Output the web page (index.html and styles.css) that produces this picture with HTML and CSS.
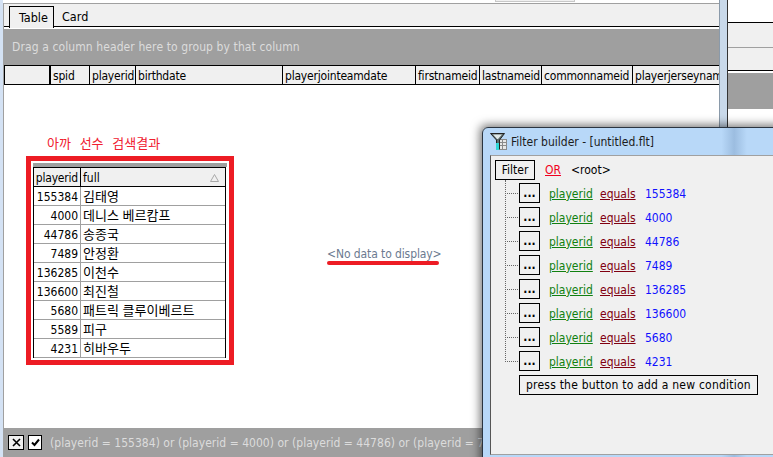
FILE: index.html
```html
<!DOCTYPE html>
<html lang="en">
<head>
  <meta charset="UTF-8" />
  <title>Filter builder</title>
  <link rel="stylesheet" href="styles.css">
</head>
<body>
  <div class="desktop">
    <div class="left-edge"></div>
    <div class="main-wrap">
      <div class="top-strip"><span class="top-box"></span></div>
      <div class="main-panel">
        <div class="tabs">
          <span class="tab active">Table</span>
          <span class="tab">Card</span>
        </div>
        <div class="group-bar">Drag a column header here to group by that column</div>
        <div class="col-header">
          <span class="col c-ind"></span>
          <span class="col c-spid">spid</span>
          <span class="col c-pid">playerid</span>
          <span class="col c-birth">birthdate</span>
          <span class="col c-join">playerjointeamdate</span>
          <span class="col c-first">firstnameid</span>
          <span class="col c-last">lastnameid</span>
          <span class="col c-common">commonnameid</span>
          <span class="col c-jersey">playerjerseynam</span>
        </div>
        <div class="grid-body">
          <p class="note">아까 선수 검색결과</p>
          <div class="result-box">
            <div class="result-top"></div>
            <div class="result-grid">
              <div class="result-row head"><span class="num">playerid</span><span class="name">full<svg class="sort" width="9" height="8" viewBox="0 0 9 8"><path d="M4.500 .5L8.500 7.500H.5z" fill="none" stroke="#a8a8a8"/></svg></span></div>
              <div class="result-row"><span class="num">155384</span><span class="name">김태영</span></div>
              <div class="result-row"><span class="num">4000</span><span class="name">데니스 베르캄프</span></div>
              <div class="result-row"><span class="num">44786</span><span class="name">송종국</span></div>
              <div class="result-row"><span class="num">7489</span><span class="name">안정환</span></div>
              <div class="result-row"><span class="num">136285</span><span class="name">이천수</span></div>
              <div class="result-row"><span class="num">136600</span><span class="name">최진철</span></div>
              <div class="result-row"><span class="num">5680</span><span class="name">패트릭 클루이베르트</span></div>
              <div class="result-row"><span class="num">5589</span><span class="name">피구</span></div>
              <div class="result-row"><span class="num">4231</span><span class="name">히바우두</span></div>
            </div>
          </div>
          <p class="no-data">&lt;No data to display&gt;</p>
        </div>
        <div class="status-bar">
          <span class="box x-box">
            <svg width="11" height="11" viewBox="0 0 11 11"><path d="M2 2l7 7M9 2l-7 7" stroke="#000" stroke-width="1.6" fill="none"/></svg>
          </span>
          <span class="box check-box">
            <svg width="11" height="11" viewBox="0 0 11 11"><path d="M2 5.500l2.500 2.500L9 2.500" stroke="#000" stroke-width="2" fill="none"/></svg>
          </span>
          <span class="filter-text">(playerid = 155384) or (playerid = 4000) or (playerid = 44786) or (playerid = 7489)</span>
        </div>
      </div>
    </div>

    <div class="split"></div>

    <div class="side-panel">
      <div class="side-a"></div>
      <div class="side-b"></div>
      <div class="side-c"></div>
      <div class="side-d"></div>
      <div class="side-e"></div>
    </div>

    <!-- floating window -->
    <div class="filter-window">
      <div class="title-bar">
        <svg class="funnel" width="18" height="18" viewBox="0 0 18 18">
          <rect x="8.500" y="6.500" width="8" height="10" fill="#e8e8e8" stroke="#8a8a8a"/>
          <path d="M9 9.500h7M9 12.500h7M12.500 7v9" stroke="#8a8a8a"/>
          <path d="M.5 .5h14L9.500 7v9H6.500V7z" fill="#5c6a6a" stroke="#222"/>
          <path d="M3 1.500h9L8 6H7z" fill="#dfe8e8"/>
          <rect x="6" y="10" width="3" height="7" fill="#2fd6d6"/>
        </svg>
        <span>Filter builder - [untitled.flt]</span>
      </div>
      <div class="client">
        <div class="root-row">
          <span class="filter-btn">Filter</span>
          <span class="or">OR</span>
          <span>&lt;root&gt;</span>
        </div>
        <div class="tree">
          <div class="cond"><span class="dots">...</span><span class="field">playerid</span><span class="op">equals</span><span class="val">155384</span></div>
          <div class="cond"><span class="dots">...</span><span class="field">playerid</span><span class="op">equals</span><span class="val">4000</span></div>
          <div class="cond"><span class="dots">...</span><span class="field">playerid</span><span class="op">equals</span><span class="val">44786</span></div>
          <div class="cond"><span class="dots">...</span><span class="field">playerid</span><span class="op">equals</span><span class="val">7489</span></div>
          <div class="cond"><span class="dots">...</span><span class="field">playerid</span><span class="op">equals</span><span class="val">136285</span></div>
          <div class="cond"><span class="dots">...</span><span class="field">playerid</span><span class="op">equals</span><span class="val">136600</span></div>
          <div class="cond"><span class="dots">...</span><span class="field">playerid</span><span class="op">equals</span><span class="val">5680</span></div>
          <div class="cond"><span class="dots">...</span><span class="field">playerid</span><span class="op">equals</span><span class="val">4231</span></div>
        </div>
        <div class="hint">press the button to add a new condition</div>
      </div>
    </div>
  </div>
</body>
</html>
```

FILE: styles.css
```css
/* 1. GLOBAL */
* {
  box-sizing: border-box;
  margin: 0;
  padding: 0;
}
html, body {
  width: 773px;
  height: 457px;
  overflow: hidden;
}
body {
  font-family: "DejaVu Sans Condensed", "Noto Sans CJK KR", sans-serif;
  font-stretch: condensed;
  font-size: 12px;
  color: #000;
  background-color: #fff;
}
.desktop {
  position: relative;
  display: flex;
  width: 773px;
  height: 457px;
  overflow: hidden;
}
.left-edge {
  flex: none;
  width: 3px;
  background-color: #d4e2f4;
}

/* 2. MAIN GRID PANEL */
.main-wrap {
  display: flex;
  flex: none;
  flex-direction: column;
  width: 716px;
}
.top-strip {
  flex: none;
  height: 3px;
  padding-left: 492px;
  background-color: #fff;
}
.top-box {
  display: block;
  width: 80px;
  height: 2px;
  background-color: #f0f0f0;
  border: 1px solid #c8c8c8;
  border-top: none;
}
.main-panel {
  display: flex;
  flex: 1;
  flex-direction: column;
  border-left: 1px solid #a0a0a0;
  border-top: 1px solid #a0a0a0;
  overflow: hidden;
}
.tabs {
  display: flex;
  flex: none;
  height: 23px;
  padding: 2px 0 0 5px;
  background-color: #f0f0f0;
  border-bottom: 1px solid #000;
}
.tab {
  height: 22px;
  line-height: 22px;
  padding: 0 8px;
  font-size: 12.500px;
}
.tab.active {
  width: 45px;
  padding: 0 9px;
  line-height: 21px;
  border: 1px solid #000;
  border-bottom: none;
  background-color: #f0f0f0;
}
.group-bar {
  flex: none;
  height: 36px;
  margin-top: 2px;
  padding-left: 8px;
  line-height: 37px;
  letter-spacing: 0.1px;
  color: #dcdcdc;
  background-color: #9f9f9f;
}
.col-header {
  display: flex;
  flex: none;
  height: 20px;
  background-color: #f0f0f0;
  border-top: 1px solid #000;
  border-bottom: 1px solid #000;
}
.col {
  height: 18px;
  line-height: 20px;
  padding-left: 2px;
  letter-spacing: -0.2px;
  border-left: 1px solid #000;
  white-space: nowrap;
  overflow: hidden;
}
.c-ind { width: 45px; }
.c-spid { width: 40px; border-left-width: 2px; }
.c-pid { width: 46px; }
.c-birth { width: 147px; }
.c-join { width: 133px; }
.c-first { width: 64px; }
.c-last { width: 62px; }
.c-common { width: 91px; }
.c-jersey { width: 87px; }

.grid-body {
  position: relative;
  flex: 1;
  background-color: #fff;
}
.note {
  position: absolute;
  left: 43px;
  top: 48px;
  font-size: 13px;
  color: #f02030;
  word-spacing: 5px;
}
.result-box {
  position: absolute;
  left: 22px;
  top: 71px;
  width: 208px;
  height: 209px;
  padding: 2px;
  border: 5px solid #ed1c24;
}
.result-top {
  height: 4px;
  background-color: #9f9f9f;
}
.result-grid {
  margin-right: 1px;
  border-left: 1px solid #000;
  border-right: 1px solid #000;
  border-top: 1px solid #000;
}
.result-row {
  display: flex;
  height: 19px;
  line-height: 20px;
  border-bottom: 1px solid #a0a0a0;
}
.result-row.head {
  background-color: #f0f0f0;
  border-bottom-color: #000;
}
.num {
  width: 47px;
  padding-right: 2px;
  text-align: right;
  border-right: 1px solid #a0a0a0;
}
.head .num {
  border-right-color: #000;
  letter-spacing: -0.2px;
}
.name {
  position: relative;
  flex: 1;
  padding-left: 2px;
  font-size: 13px;
}
.head .name {
  font-size: 12px;
}
.sort {
  position: absolute;
  right: 6px;
  top: 6px;
}
.no-data {
  position: absolute;
  left: 323px;
  top: 162px;
  letter-spacing: -0.1px;
  color: #6b7a90;
}
.no-data::after {
  content: "";
  display: block;
  width: 112px;
  height: 4px;
  border-radius: 2px;
  background-color: #ed1c24;
}
.status-bar {
  display: flex;
  flex: none;
  align-items: center;
  height: 29px;
  padding-left: 4px;
  color: #dcdcdc;
  background-color: #9f9f9f;
  white-space: nowrap;
}
.box {
  display: flex;
  align-items: center;
  justify-content: center;
  height: 15px;
  border: 1px solid #000;
  background-color: #f0f0f0;
}
.x-box { width: 16px; margin-right: 4px; }
.check-box { width: 14px; background-color: #fff; }
.filter-text { margin-left: 8px; letter-spacing: 0.03px; }

/* 3. SIDE PANEL */
.split {
  flex: none;
  width: 8px;
  background-color: #c9d9ea;
  border-left: 1px solid #8a9aaa;
}
.side-panel {
  flex: 1;
  border-left: 1px solid #333;
}
.side-a { height: 23px; background-color: #fff; border-bottom: 1px solid #000; }
.side-b { height: 25px; background-color: #f0f0f0; border-bottom: 1px solid #a0a0a0; }
.side-c { height: 23px; background-color: #f0f0f0; border-bottom: 1px solid #000; }
.side-d { height: 36px; margin-top: 2px; background-color: #9f9f9f; }
.side-e { height: 20px; background-color: #fff; }

/* 4. FILTER WINDOW */
.filter-window {
  position: absolute;
  left: 482px;
  top: 127px;
  width: 320px;
  height: 340px;
  padding: 0 0 0 7px;
  border: 1px solid #2a3440;
  border-radius: 6px 6px 0 0;
  background: linear-gradient(to right, #b8d8f8 75%, #9cbde0 79%, #b8d8f8 83%);
  box-shadow: -2px -2px 10px rgba(0, 0, 0, 0.55);
}
.title-bar {
  display: flex;
  align-items: center;
  gap: 3px;
  height: 27px;
  color: #1c1c1c;
}
.client {
  height: 300px;
  padding: 4px 0 0 4px;
  background-color: #f0f0f0;
  border-top: 1px solid #a0a0a0;
  border-left: 1px solid #555;
  border-bottom: 1px solid #a0a0a0;
}
.root-row {
  display: flex;
  align-items: center;
  gap: 10px;
  height: 20px;
}
.filter-btn {
  width: 40px;
  height: 20px;
  line-height: 18px;
  text-align: center;
  border: 1px solid #000;
}
.or {
  color: #f00020;
  text-decoration: underline;
}
.tree {
  position: relative;
  margin: -1px 0 0 10px;
  padding-left: 14px;
}
.tree::before {
  content: "";
  position: absolute;
  left: 0;
  top: 1px;
  height: 182px;
  border-left: 1px dotted #666;
}
.cond {
  position: relative;
  display: flex;
  align-items: center;
  height: 24px;
  padding-top: 4px;
}
.cond::before {
  content: "";
  position: absolute;
  left: -14px;
  top: 14px;
  width: 13px;
  border-top: 1px dotted #666;
}
.dots {
  width: 21px;
  height: 20px;
  line-height: 19px;
  text-align: center;
  font-weight: bold;
  border: 1px solid #000;
  margin-right: 9px;
}
.field {
  width: 41px;
  margin: 1px 10px 0 0;
  color: #108010;
  text-decoration: underline;
}
.op {
  width: 35px;
  margin: 1px 10px 0 0;
  color: #800010;
  text-decoration: underline;
}
.val {
  margin-top: 1px;
  color: #1010ff;
}
.hint {
  width: 239px;
  height: 20px;
  margin: 4px 0 0 24px;
  padding-left: 6px;
  line-height: 18px;
  letter-spacing: 0.22px;
  border: 1px solid #000;
  white-space: nowrap;
}
```
